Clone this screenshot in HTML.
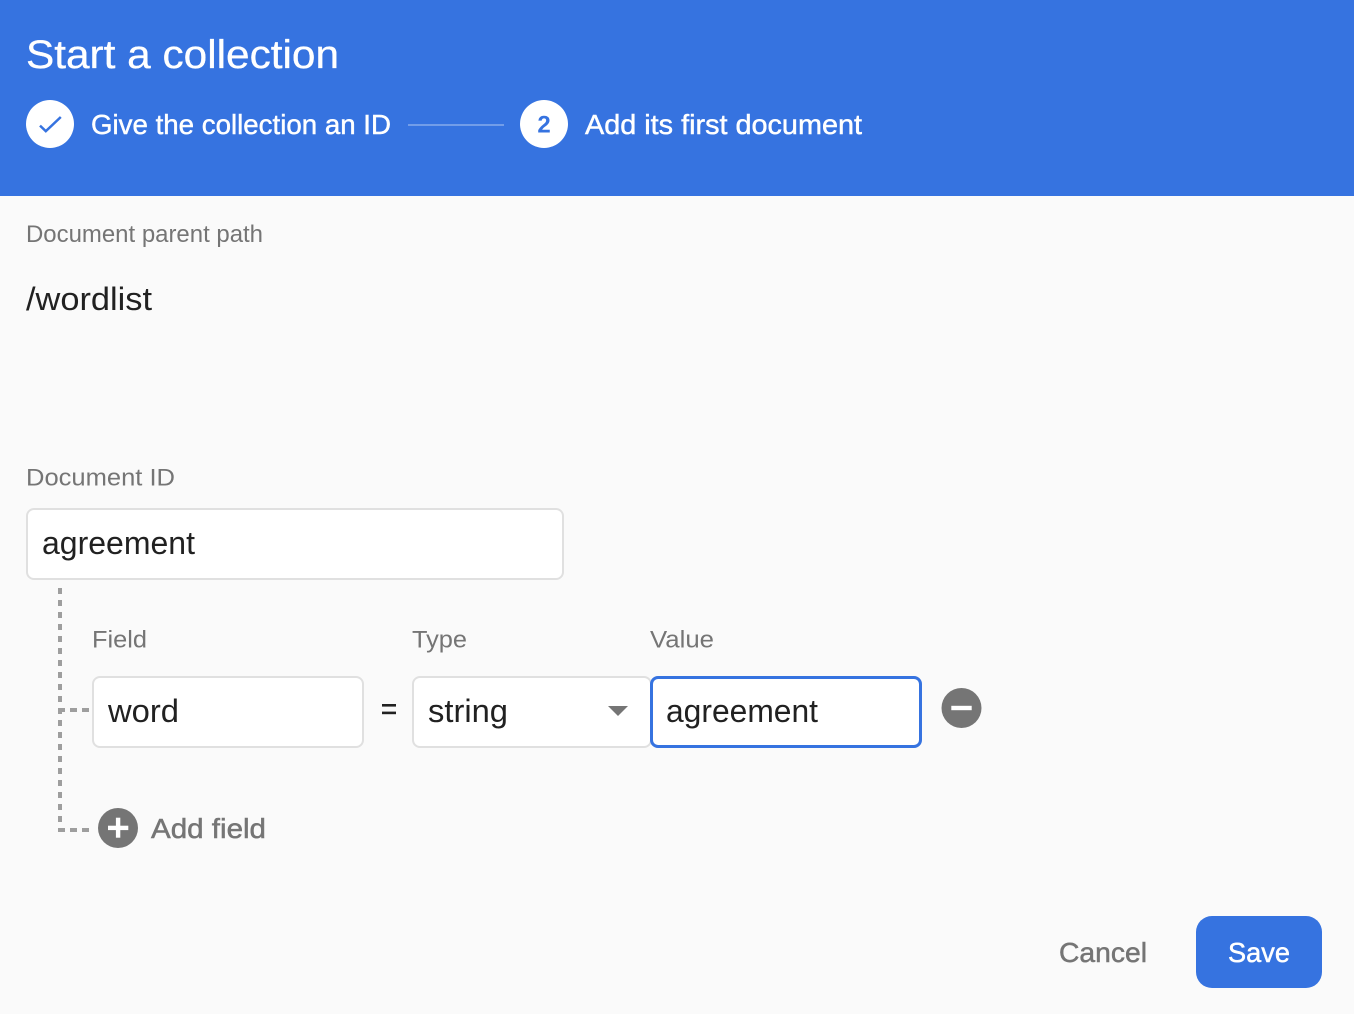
<!DOCTYPE html>
<html lang="en">
<head>
<meta charset="utf-8">
<title>Start a collection</title>
<style>
html,body{margin:0;padding:0;width:1354px;height:1014px;overflow:hidden;background:#fafafa}
svg{display:block}
text{font-family:"Liberation Sans",Arial,sans-serif;white-space:pre}
.lab{font-size:24px;fill:#757575}
.val{font-size:32px;fill:#212121}
.step{font-size:28px;fill:#fff;stroke:#fff;stroke-width:.45px}
.med{font-size:28px;fill:#757575;stroke:#757575;stroke-width:.5px}
</style>
</head>
<body>
<svg width="1354" height="1014" viewBox="0 0 1354 1014" xmlns="http://www.w3.org/2000/svg">
<rect width="1354" height="1014" fill="#fafafa"/>
<rect width="1354" height="196" fill="#3673e0"/>

<text x="26" y="68" font-size="40" fill="#fff" stroke="#fff" stroke-width=".3" textLength="313" lengthAdjust="spacingAndGlyphs">Start a collection</text>

<circle cx="50" cy="124" r="24" fill="#fff"/>
<path d="M40 125.6l5.8 5.6L60.8 117" fill="none" stroke="#3673e0" stroke-width="2.5"/>
<text x="91" y="134" class="step" textLength="300" lengthAdjust="spacingAndGlyphs">Give the collection an ID</text>
<rect x="408" y="124" width="96" height="2" fill="#fff" fill-opacity=".3"/>
<circle cx="544" cy="124" r="24" fill="#fff"/>
<text x="544" y="132.5" font-size="24" font-weight="700" fill="#3673e0" text-anchor="middle">2</text>
<text x="585" y="134" class="step" textLength="277" lengthAdjust="spacingAndGlyphs">Add its first document</text>

<text x="26" y="242" class="lab" textLength="237" lengthAdjust="spacingAndGlyphs">Document parent path</text>
<text x="26" y="310" class="val" textLength="126" lengthAdjust="spacingAndGlyphs">/wordlist</text>

<text x="26" y="485.5" class="lab" textLength="149" lengthAdjust="spacingAndGlyphs">Document ID</text>
<rect x="27" y="509" width="536" height="70" rx="7" fill="#fff" stroke="#e0e0e0" stroke-width="2"/>
<text x="42" y="554" class="val" textLength="153" lengthAdjust="spacingAndGlyphs">agreement</text>

<path d="M60 588V832" fill="none" stroke="#9e9e9e" stroke-width="4" stroke-dasharray="6 6"/>
<path d="M58 710H90" fill="none" stroke="#9e9e9e" stroke-width="4" stroke-dasharray="7 5"/>
<path d="M58 830H90" fill="none" stroke="#9e9e9e" stroke-width="4" stroke-dasharray="7 5"/>

<text x="92" y="647.5" class="lab" textLength="55" lengthAdjust="spacingAndGlyphs">Field</text>
<text x="412" y="647.5" class="lab" textLength="55" lengthAdjust="spacingAndGlyphs">Type</text>
<text x="650" y="647.5" class="lab" textLength="64" lengthAdjust="spacingAndGlyphs">Value</text>

<rect x="93" y="677" width="270" height="70" rx="7" fill="#fff" stroke="#e0e0e0" stroke-width="2"/>
<text x="108" y="722" class="val" textLength="71" lengthAdjust="spacingAndGlyphs">word</text>
<rect x="382" y="704" width="14" height="2.6" fill="#212121"/>
<rect x="382" y="711.6" width="14" height="2.6" fill="#212121"/>

<rect x="413" y="677" width="238" height="70" rx="7" fill="#fff" stroke="#e0e0e0" stroke-width="2"/>
<text x="428" y="722" class="val" textLength="80" lengthAdjust="spacingAndGlyphs">string</text>
<path d="M608 706h20l-10 10z" fill="#757575"/>

<rect x="651.5" y="677.5" width="269" height="69" rx="6.5" fill="#fff" stroke="#3673e0" stroke-width="3"/>
<text x="666" y="722" class="val" textLength="152" lengthAdjust="spacingAndGlyphs">agreement</text>

<circle cx="961.5" cy="708" r="20" fill="#757575"/>
<rect x="951.3" y="705.8" width="20.4" height="4.4" fill="#fff"/>

<circle cx="118" cy="828" r="20" fill="#757575"/>
<rect x="108" y="825.7" width="20.3" height="4.4" fill="#fff"/>
<rect x="115.9" y="817.7" width="4.4" height="20" fill="#fff"/>
<text x="151" y="838" class="med" textLength="115" lengthAdjust="spacingAndGlyphs">Add field</text>

<text x="1059" y="962" class="med" textLength="88" lengthAdjust="spacingAndGlyphs">Cancel</text>
<rect x="1196" y="916" width="126" height="72" rx="16" fill="#3673e0"/>
<text x="1228" y="962" class="step" textLength="62" lengthAdjust="spacingAndGlyphs">Save</text>
</svg>
</body>
</html>
